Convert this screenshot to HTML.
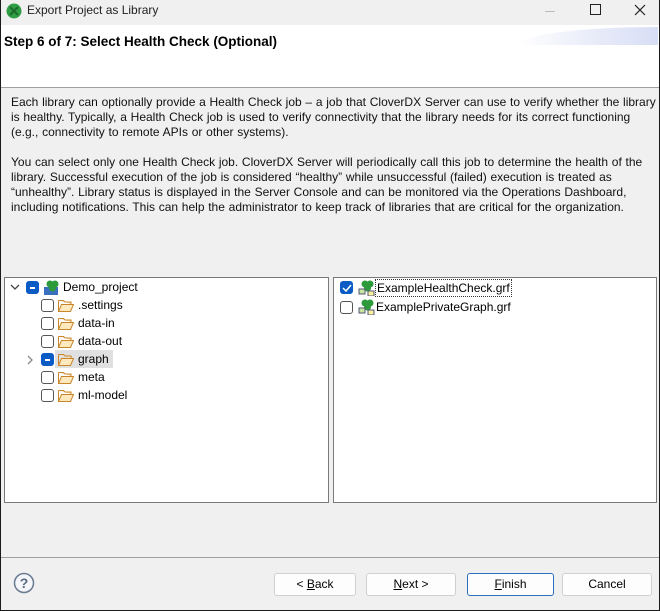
<!DOCTYPE html>
<html><head><meta charset="utf-8"><style>
*{margin:0;padding:0;box-sizing:border-box}
body{width:660px;height:611px;overflow:hidden;font-family:"Segoe UI","Liberation Sans",sans-serif;font-size:12px;color:#000;background:#f0f0f0;position:relative}
.win{position:absolute;left:0;top:0;width:660px;height:611px;border:1px solid #1a1a1a;border-top:none}
.title{position:absolute;left:0;top:0;width:660px;height:24px;background:#f0f0f0}
.title span{position:absolute;left:27px;top:3px;font-size:12px;color:#222}
.head{position:absolute;left:0;top:25px;width:659px;height:63px;background:#fff;border-bottom:1px solid #a0a0a0}
.head b{position:absolute;left:4px;top:9px;font-family:"Liberation Sans",sans-serif;font-size:13.5px;font-weight:bold}
.grad{position:absolute;right:1px;top:2px;width:140px;height:18px;background:linear-gradient(90deg,#fff,#e6eaf8 60%,#d8def6);border-radius:100% 0 0 0/100% 0 0 0}
.txt{position:absolute;left:11px;top:95px;line-height:15px;white-space:nowrap;font-size:12px;letter-spacing:0;word-spacing:0.4px;color:#111}
.panel{position:absolute;top:277px;height:226px;background:#fff;border:1px solid #7a7a7a}
.row{position:absolute;height:18px;line-height:18px;white-space:nowrap}
.cb{position:absolute;width:13px;height:13px;border:1px solid #555;border-radius:3px;background:#fff}
.cb.on{background:#0a5bc4;border-color:#0a5bc4}
.cb.on::after{content:"";position:absolute;left:3px;top:5px;width:5px;height:1.5px;background:#fff}
.cb.chk{background:#0a5bc4;border-color:#0a5bc4}
.fold{position:absolute;width:16px;height:13px}
.btn{position:absolute;top:573px;height:23px;background:#fdfdfd;border:1px solid #d0d0d0;border-radius:3px;text-align:center;line-height:21px;font-size:12px}
</style></head><body>
<svg width="0" height="0" style="position:absolute"><defs><symbol id="f" viewBox="0 0 16 13"><path d="M0.5 1.5h5l1.5 1.5h6v2" fill="#fbe3b0" stroke="#c8852a"/><path d="M0.5 1.5v11h12l3-7h-12l-3 7" fill="#fde9bd" stroke="#c8852a"/></symbol></defs></svg>
<div class="title">
<svg style="position:absolute;left:6px;top:3px" width="16" height="16"><circle cx="8" cy="8" r="7.5" fill="#2f9e44"/><path d="M4 4L12 12M12 4L4 12" stroke="#1d6b2c" stroke-width="2"/></svg>
<span>Export Project as Library</span>
<div style="position:absolute;left:545px;top:11px;width:10px;height:1px;background:#bbb"></div>
<div style="position:absolute;left:590px;top:4px;width:11px;height:11px;border:1px solid #222"></div>
<svg style="position:absolute;left:634px;top:4px" width="12" height="12"><path d="M1 1L11 11M11 1L1 11" stroke="#222" stroke-width="1.2"/></svg>
</div>
<div class="head"><b>Step 6 of 7: Select Health Check (Optional)</b><div class="grad"></div></div>
<div class="txt">Each library can optionally provide a Health Check job – a job that CloverDX Server can use to verify whether the library<br>is healthy. Typically, a Health Check job is used to verify connectivity that the library needs for its correct functioning<br>(e.g., connectivity to remote APIs or other systems).<br><br>You can select only one Health Check job. CloverDX Server will periodically call this job to determine the health of the<br>library. Successful execution of the job is considered “healthy” while unsuccessful (failed) execution is treated as<br>“unhealthy”. Library status is displayed in the Server Console and can be monitored via the Operations Dashboard,<br>including notifications. This can help the administrator to keep track of libraries that are critical for the organization.</div>

<div class="panel" style="left:4px;width:325px">
<svg style="position:absolute;left:5px;top:6px" width="10" height="7"><path d="M1 1L5 5L9 1" stroke="#444" fill="none" stroke-width="1.3"/></svg>
<div class="cb on" style="left:21px;top:3px"></div>
<svg style="position:absolute;left:38px;top:1px" width="18" height="17"><rect x="1" y="8" width="14" height="8" fill="#3a6fc0"/><circle cx="7" cy="5" r="3.5" fill="#2e9b3a"/><circle cx="12" cy="5" r="3.5" fill="#2e9b3a"/><circle cx="9.5" cy="9" r="3.5" fill="#2e9b3a"/></svg>
<div class="row" style="left:58px;top:0">Demo_project</div>
</div>
<div style="position:absolute;left:0;top:0">
<div class="cb" style="left:41px;top:299px"></div><svg class="fold" style="left:58px;top:299px"><use href="#f"/></svg><div class="row" style="left:78px;top:296px">.settings</div>
<div class="cb" style="left:41px;top:317px"></div><svg class="fold" style="left:58px;top:317px"><use href="#f"/></svg><div class="row" style="left:78px;top:314px">data-in</div>
<div class="cb" style="left:41px;top:335px"></div><svg class="fold" style="left:58px;top:335px"><use href="#f"/></svg><div class="row" style="left:78px;top:332px">data-out</div>
<div style="position:absolute;left:55px;top:350px;width:58px;height:18px;background:#e0e0e0"></div>
<svg style="position:absolute;left:27px;top:355px" width="7" height="10"><path d="M1 1L5 5L1 9" stroke="#888" fill="none" stroke-width="1.3"/></svg>
<div class="cb on" style="left:41px;top:353px"></div><svg class="fold" style="left:58px;top:353px"><use href="#f"/></svg><div class="row" style="left:78px;top:350px">graph</div>
<div class="cb" style="left:41px;top:371px"></div><svg class="fold" style="left:58px;top:371px"><use href="#f"/></svg><div class="row" style="left:78px;top:368px">meta</div>
<div class="cb" style="left:41px;top:389px"></div><svg class="fold" style="left:58px;top:389px"><use href="#f"/></svg><div class="row" style="left:78px;top:386px">ml-model</div>
</div>

<div class="panel" style="left:333px;width:324px"></div>
<div class="cb chk" style="left:340px;top:281px"></div>
<svg style="position:absolute;left:342px;top:284px" width="10" height="8"><path d="M1 4L4 7L9 1" stroke="#fff" fill="none" stroke-width="1.5"/></svg>
<svg style="position:absolute;left:358px;top:279px" width="17" height="17"><circle cx="7" cy="5" r="3.5" fill="#2e9b3a"/><circle cx="12" cy="5" r="3.5" fill="#2e9b3a"/><circle cx="9.5" cy="9" r="3.5" fill="#2e9b3a"/><rect x="1" y="10" width="6" height="5" fill="#c8e6a0" stroke="#557"/><rect x="10" y="12" width="6" height="5" fill="#f6f0a0" stroke="#557"/></svg>
<div class="row" style="left:375px;top:279px;border:1px dotted #333;padding:0 1px;height:18px;line-height:16px">ExampleHealthCheck.grf</div>
<div class="cb" style="left:340px;top:301px"></div>
<svg style="position:absolute;left:358px;top:298px" width="17" height="17"><circle cx="7" cy="5" r="3.5" fill="#2e9b3a"/><circle cx="12" cy="5" r="3.5" fill="#2e9b3a"/><circle cx="9.5" cy="9" r="3.5" fill="#2e9b3a"/><rect x="1" y="10" width="6" height="5" fill="#c8e6a0" stroke="#557"/><rect x="10" y="12" width="6" height="5" fill="#f6f0a0" stroke="#557"/></svg>
<div class="row" style="left:376px;top:298px">ExamplePrivateGraph.grf</div>

<div style="position:absolute;left:0;top:557px;width:660px;height:1px;background:#a0a0a0"></div>
<svg style="position:absolute;left:13px;top:572px" width="22" height="22"><circle cx="11" cy="11" r="9.5" fill="#f4f6fa" stroke="#6a7a90" stroke-width="1.5"/><text x="11" y="16" text-anchor="middle" font-family="Liberation Sans" font-weight="bold" font-size="14" fill="#5a6a80">?</text></svg>
<div class="btn" style="left:274px;width:82px">&lt; <u>B</u>ack</div>
<div class="btn" style="left:366px;width:90px"><u>N</u>ext &gt;</div>
<div class="btn" style="left:467px;width:87px;border-color:#2a6fc0"><u>F</u>inish</div>
<div class="btn" style="left:562px;width:90px">Cancel</div>
<div class="win"></div>
</body></html>
